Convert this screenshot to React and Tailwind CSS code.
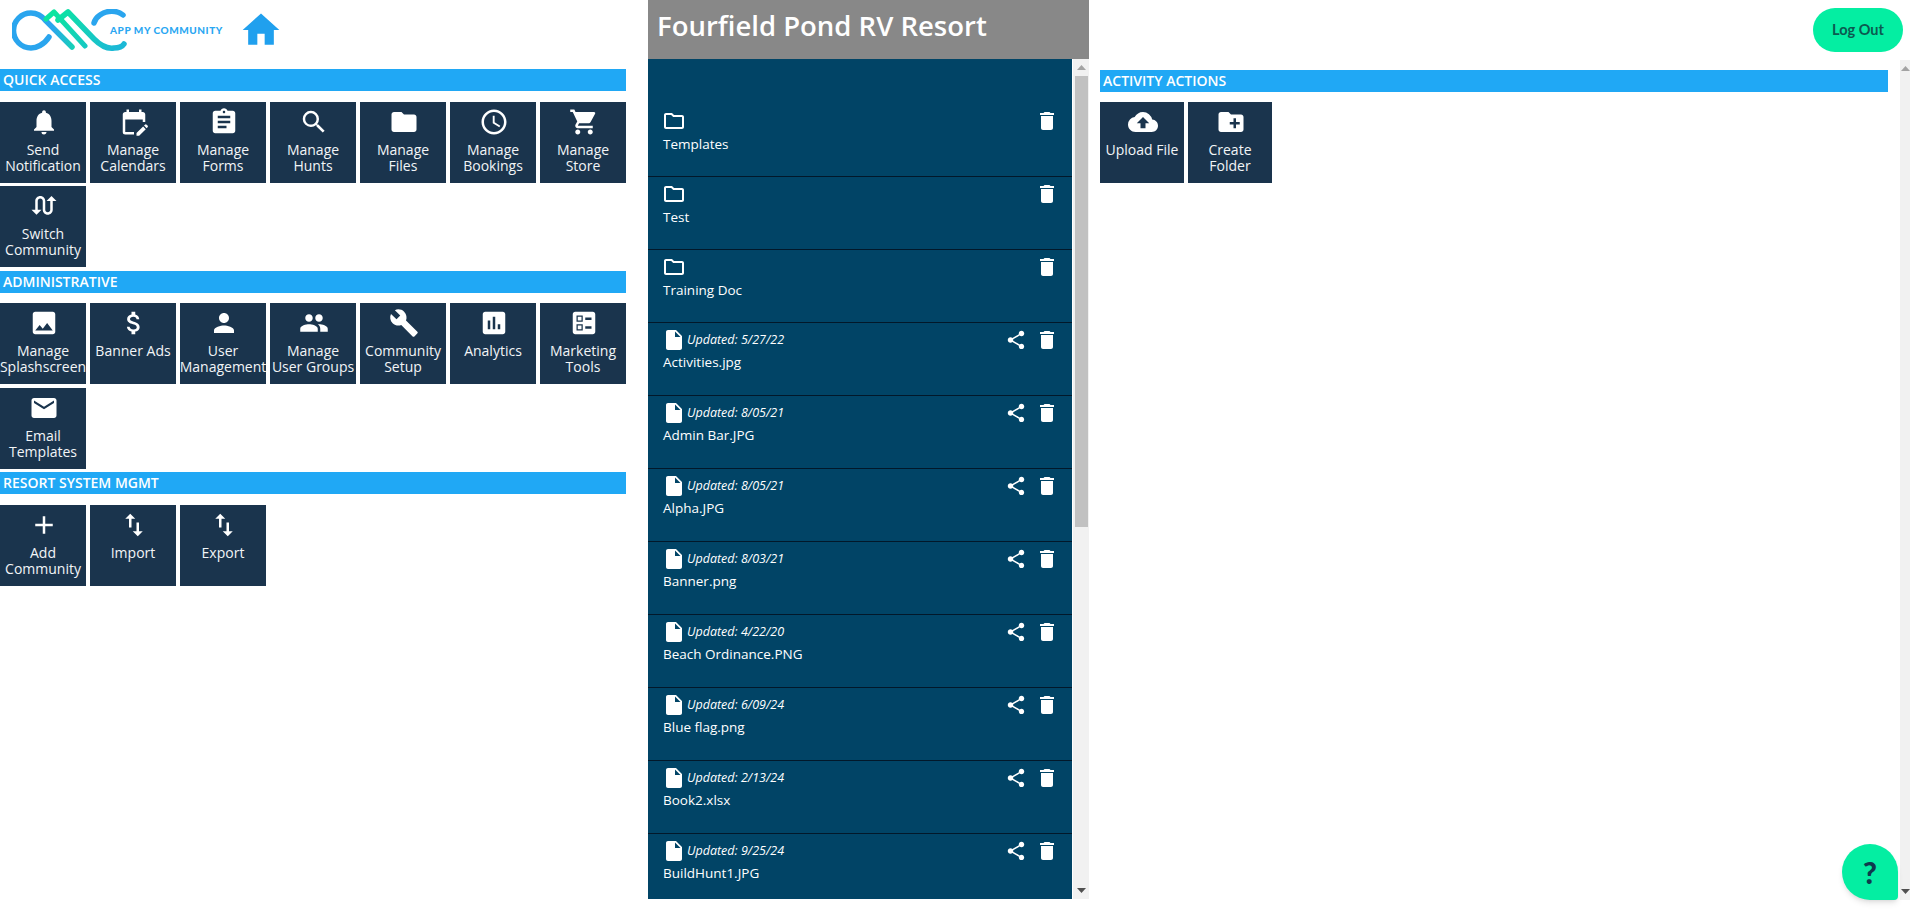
import React from 'react';
import {
  MdNotifications, MdEditCalendar, MdAssignment, MdSearch, MdFolder, MdAccessTime, MdShoppingCart, MdSwapCalls,
  MdImage, MdAttachMoney, MdPerson, MdPeople, MdBuild, MdAssessment, MdBallot, MdEmail, MdAdd, MdImportExport,
  MdCloudUpload, MdCreateNewFolder, MdOutlineFolder, MdInsertDriveFile, MdShare, MdDelete, MdHome,
} from 'react-icons/md';

const quickAccess = [
  { icon: MdNotifications, label: ['Send', 'Notification'] },
  { icon: MdEditCalendar, label: ['Manage', 'Calendars'] },
  { icon: MdAssignment, label: ['Manage', 'Forms'] },
  { icon: MdSearch, label: ['Manage', 'Hunts'] },
  { icon: MdFolder, label: ['Manage', 'Files'] },
  { icon: MdAccessTime, label: ['Manage', 'Bookings'] },
  { icon: MdShoppingCart, label: ['Manage', 'Store'] },
  { icon: MdSwapCalls, label: ['Switch', 'Community'] },
];

const administrative = [
  { icon: MdImage, label: ['Manage', 'Splashscreen'] },
  { icon: MdAttachMoney, label: ['Banner Ads'] },
  { icon: MdPerson, label: ['User', 'Management'] },
  { icon: MdPeople, label: ['Manage', 'User Groups'] },
  { icon: MdBuild, label: ['Community', 'Setup'] },
  { icon: MdAssessment, label: ['Analytics'] },
  { icon: MdBallot, label: ['Marketing', 'Tools'] },
  { icon: MdEmail, label: ['Email', 'Templates'] },
];

const resortMgmt = [
  { icon: MdAdd, label: ['Add', 'Community'] },
  { icon: MdImportExport, label: ['Import'] },
  { icon: MdImportExport, label: ['Export'] },
];

const activityActions = [
  { icon: MdCloudUpload, label: ['Upload File'] },
  { icon: MdCreateNewFolder, label: ['Create', 'Folder'] },
];

const folders = ['Templates', 'Test', 'Training Doc'];

const files = [
  { name: 'Activities.jpg', updated: '5/27/22' },
  { name: 'Admin Bar.JPG', updated: '8/05/21' },
  { name: 'Alpha.JPG', updated: '8/05/21' },
  { name: 'Banner.png', updated: '8/03/21' },
  { name: 'Beach Ordinance.PNG', updated: '4/22/20' },
  { name: 'Blue flag.png', updated: '6/09/24' },
  { name: 'Book2.xlsx', updated: '2/13/24' },
  { name: 'BuildHunt1.JPG', updated: '9/25/24' },
];

function Logo() {
  return (
    <svg width="116" height="44" viewBox="0 0 116 44" fill="none" className="shrink-0">
      <defs>
        <linearGradient id="logoBlue" x1="0" y1="0" x2="116" y2="0" gradientUnits="userSpaceOnUse">
          <stop offset="0.35" stopColor="#2aa5ee" />
          <stop offset="0.55" stopColor="#14d6b0" />
          <stop offset="0.85" stopColor="#1fb8d8" />
        </linearGradient>
        <linearGradient id="logoGreen" x1="30" y1="0" x2="100" y2="44" gradientUnits="userSpaceOnUse">
          <stop offset="0.15" stopColor="#0be5a0" />
          <stop offset="1" stopColor="#1cb9d6" />
        </linearGradient>
      </defs>
      <path d="M37 28C32 36 24 39 19 39A17 17 0 0 1 19 4C26 4 30 7 34 12L60 38" stroke="url(#logoBlue)" strokeWidth="5.5" strokeLinecap="round" />
      <path d="M34 10L42 3L73 37" stroke="url(#logoGreen)" strokeWidth="5" strokeLinecap="round" strokeLinejoin="round" />
      <path d="M46 11L56 3L82 30C89 37 96 40 102 39C107 39 110 38 112 35" stroke="url(#logoGreen)" strokeWidth="5.5" strokeLinecap="round" strokeLinejoin="round" />
      <path d="M111 6C105 1 95 1 88 6C85 8 83 10 82 14" stroke="#2aa5ee" strokeWidth="5.5" strokeLinecap="round" />
    </svg>
  );
}

function SectionHeader({ title }) {
  return (
    <div className="h-[22px] bg-[#20a8f5] pl-[3px] text-[14px] leading-[22px] font-semibold text-white">{title}</div>
  );
}

function Tile({ icon: Icon, label, wide }) {
  return (
    <div className={`${wide ? 'w-[84px]' : 'w-[86px]'} h-[81px] bg-[#1a344d] flex flex-col items-center pt-[5px] text-[#f2f5f7] overflow-hidden`}>
      <Icon size={30} className="ml-[2px] shrink-0 text-white" />
      <div className="mt-[5px] text-center text-[14px] leading-[16px] whitespace-nowrap">
        {label.map((line) => (
          <div key={line}>{line}</div>
        ))}
      </div>
    </div>
  );
}

function TileGrid({ items, wide, className }) {
  return (
    <div className={`flex flex-wrap gap-x-[4px] ${className}`}>
      {items.map((item) => (
        <Tile key={item.label.join(' ')} {...item} wide={wide} />
      ))}
    </div>
  );
}

function Row({ icon: Icon, name, updated, first }) {
  return (
    <div className={`${first ? 'h-[118px] pt-[50px]' : 'h-[73px] pt-[5px]'} border-b border-[#02182a] pl-[15px] pr-[13px] text-white`}>
      <div className="flex items-center h-[24px]">
        <Icon size={24} className="shrink-0 ml-[-1px]" />
        {updated && <span className="ml-[1px] text-[12.5px] italic">Updated: {updated}</span>}
        <div className="ml-auto flex items-center gap-[8px]">
          {updated && <MdShare size={22} />}
          <MdDelete size={24} />
        </div>
      </div>
      <div className={`${updated ? 'mt-0' : 'mt-[1px]'} text-[13.5px] leading-[20px]`}>{name}</div>
    </div>
  );
}

function Scrollbar({ className, thumb }) {
  return (
    <div className={`${className} bg-[#f1f1f1] flex flex-col items-center justify-between`}>
      <div className="flex flex-col items-center w-full">
        <svg width="9" height="5" viewBox="0 0 9 5" className="mt-[6px] mb-[6px]"><path d="M4.5 0L9 5H0Z" fill="#a3a3a3" /></svg>
        {thumb && <div className="h-[451px] w-[13px] bg-[#c1c1c1]" />}
      </div>
      <svg width="9" height="5" viewBox="0 0 9 5" className="mb-[6px]"><path d="M4.5 5L9 0H0Z" fill="#505050" /></svg>
    </div>
  );
}

export default function App() {
  return (
    <div className="relative flex h-[910px] overflow-hidden bg-white font-['Open_Sans',sans-serif]">
      {/* Left menus */}
      <div className="w-[626px] shrink-0">
        <div className="flex h-[69px] items-start pl-[12px] pt-[9px]">
          <Logo />
          <span className="ml-[-18px] mt-[14px] text-[10px] leading-[14px] font-black tracking-[0.55px] text-[#2aa7f2] font-['Lato',sans-serif] whitespace-nowrap">APP MY COMMUNITY</span>
          <MdHome size={44} className="ml-[16px] mt-[-1px] shrink-0 text-[#20a0ee]" />
        </div>
        <SectionHeader title="QUICK ACCESS" />
        <TileGrid items={quickAccess} className="gap-y-[3px] pt-[11px]" />
        <div className="h-[4px]" />
        <SectionHeader title="ADMINISTRATIVE" />
        <TileGrid items={administrative} className="gap-y-[4px] pt-[10px]" />
        <div className="h-[3px]" />
        <SectionHeader title="RESORT SYSTEM MGMT" />
        <TileGrid items={resortMgmt} className="gap-y-[3px] pt-[11px]" />
      </div>

      {/* File list */}
      <div className="ml-[22px] w-[441px] shrink-0">
        <div className="h-[59px] bg-[#888888] pl-[9px] text-[27.5px] leading-[52px] font-semibold text-white whitespace-nowrap">
          Fourfield Pond RV Resort
        </div>
        <div className="flex h-[840px]">
          <div className="w-[424px] bg-[#014466] overflow-hidden">
            {folders.map((name, index) => (
              <Row key={name} icon={MdOutlineFolder} name={name} first={index === 0} />
            ))}
            {files.map((file) => (
              <Row key={file.name} icon={MdInsertDriveFile} name={file.name} updated={file.updated} />
            ))}
          </div>
          <Scrollbar className="ml-[1px] w-[16px]" thumb />
        </div>
      </div>

      {/* Actions */}
      <div className="flex-1 min-w-0">
        <div className="flex h-[60px] justify-end items-start pr-[7px] pt-[8px]">
          <button className="h-[44px] w-[90px] rounded-[22px] bg-[#04eea2] text-[14.5px] font-bold text-[#0c5a50] font-['Lato',sans-serif]">Log Out</button>
        </div>
        <div className="flex h-[840px]">
          <div className="flex-1 pl-[11px] pr-[12px] pt-[10px]">
            <SectionHeader title="ACTIVITY ACTIONS" />
            <TileGrid items={activityActions} wide className="pt-[10px]" />
          </div>
          <Scrollbar className="w-[10px]" />
        </div>
      </div>

      {/* Help bubble */}
      <button className="absolute left-[1842px] top-[844px] flex h-[56px] w-[56px] items-center justify-center rounded-[28px] rounded-br-[4px] bg-[#04eea2] text-[30px] font-black text-[#0f3a4d] shadow-md font-['Lato',sans-serif]">
        ?
      </button>
    </div>
  );
}
